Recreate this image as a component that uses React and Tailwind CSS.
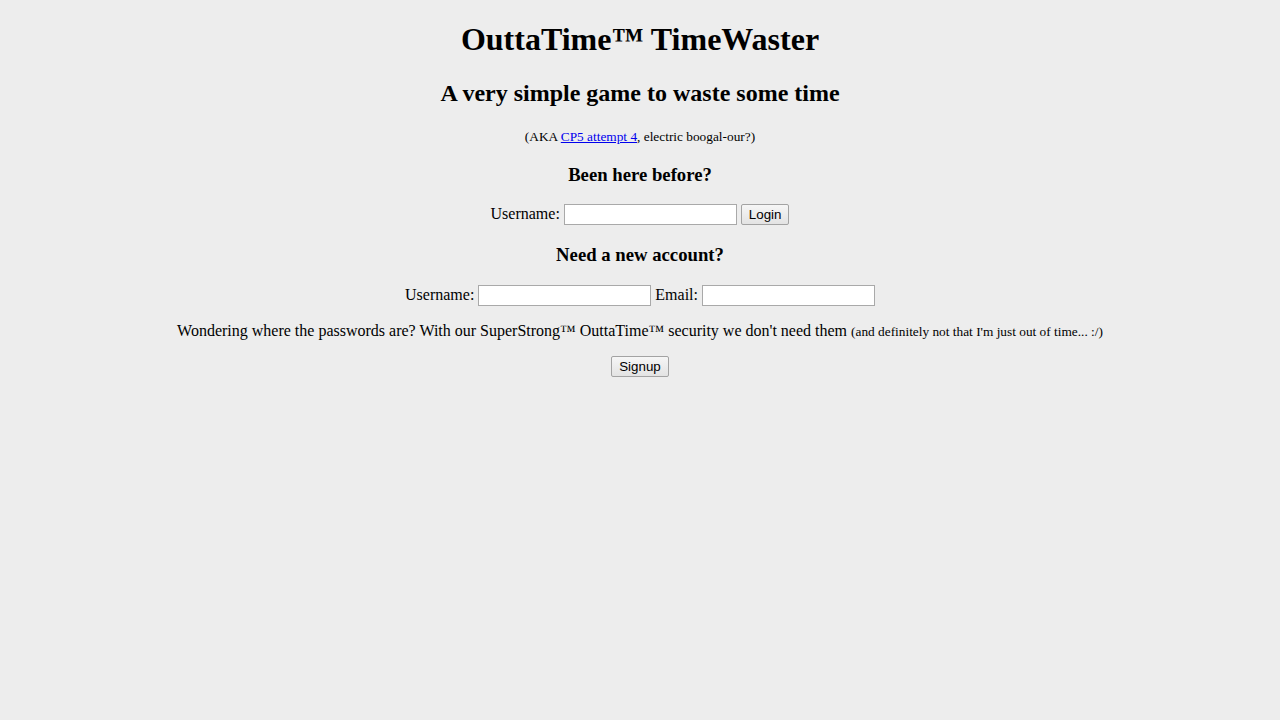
const inputCls =
    "w-[173px] h-[21px] border border-[#a9a9a9] bg-white px-[2px] align-baseline font-['Liberation_Sans',sans-serif] text-[13.33px] outline-none";
const buttonCls =
    "h-[21px] px-[7px] border border-[#a3a3a3] rounded-[2px] bg-gradient-to-b from-[#f6f6f6] to-[#e3e3e3] text-black align-baseline font-['Liberation_Sans',sans-serif] text-[13.33px] leading-[normal]";

const App = () => {
    return (
        <div className="flow-root min-h-screen bg-[#ededed] text-black font-['Liberation_Serif',serif] leading-[normal] text-[16px]">
            <div className="m-2 text-center">
                <h1 className="my-[21.44px] text-[32px] font-bold">OuttaTime™ TimeWaster</h1>
                <h2 className="my-[19.92px] text-[24px] font-bold">A very simple game to waste some time</h2>
                <p className="my-4">
                    <small className="text-[13.33px]">
                        (AKA{' '}
                        <a href="#" className="text-[#0000ee] underline">CP5 attempt 4</a>
                        , electric boogal-our?)
                    </small>
                </p>

                <h3 className="my-[18.72px] text-[18.72px] font-bold">Been here before?</h3>
                <p className="my-4">
                    Username: <input type="text" className={inputCls} />{' '}
                    <button className={buttonCls}>Login</button>
                </p>

                <h3 className="my-[18.72px] text-[18.72px] font-bold">Need a new account?</h3>
                <p className="my-4">
                    Username: <input type="text" className={inputCls} /> Email:{' '}
                    <input type="text" className={inputCls} />
                </p>
                <p className="my-4">
                    Wondering where the passwords are? With our SuperStrong™ OuttaTime™ security we don't need them{' '}
                    <small className="text-[13.33px]">(and definitely not that I'm just out of time... :/)</small>
                </p>
                <p className="my-4">
                    <button className={buttonCls}>Signup</button>
                </p>
            </div>
        </div>
    );
};

export default App;
